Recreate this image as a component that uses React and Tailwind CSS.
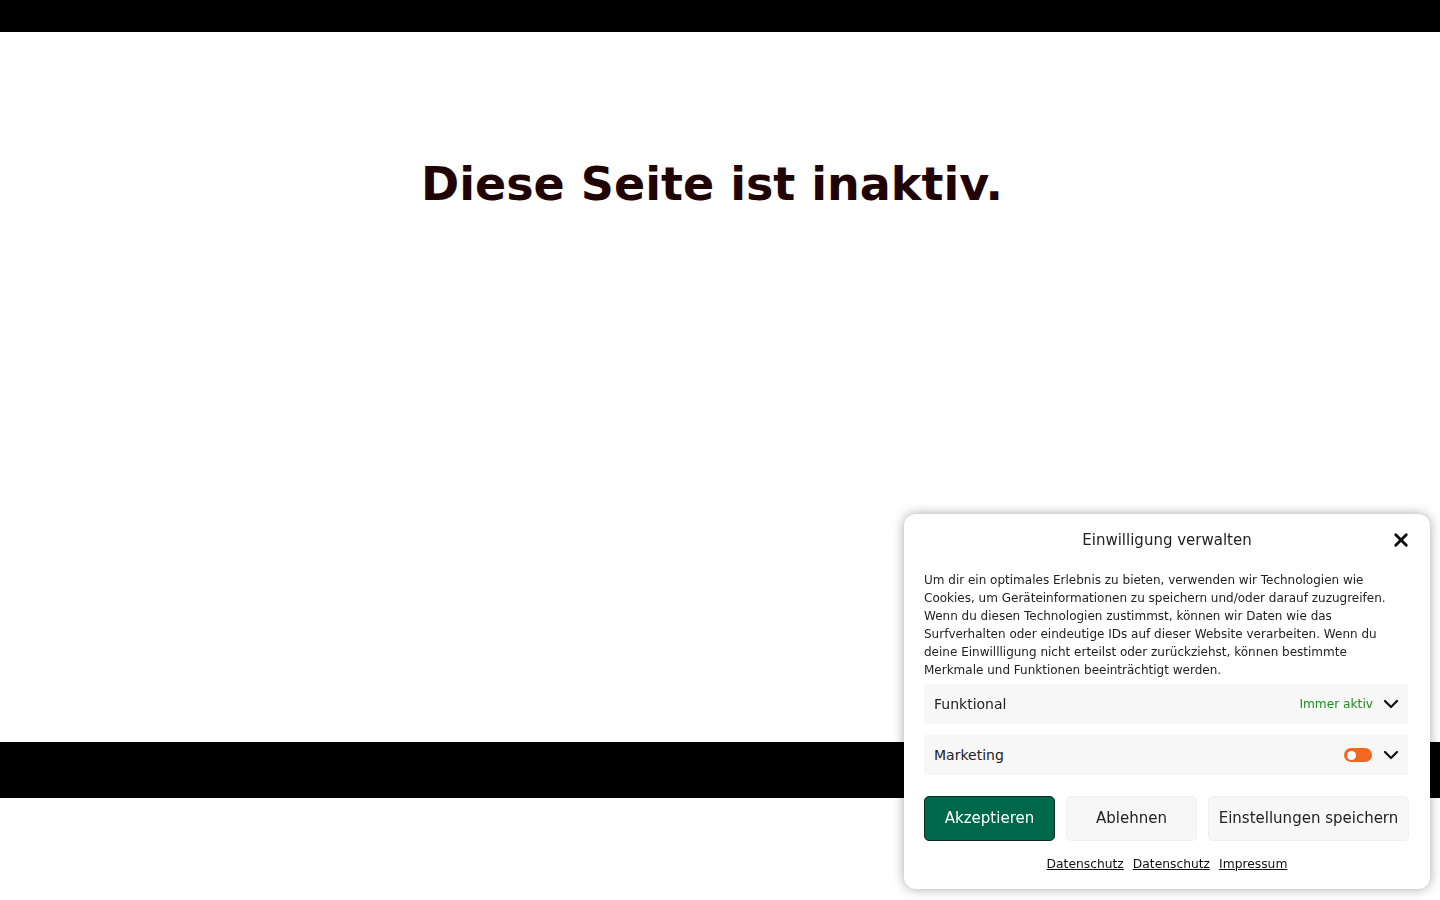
import React from "react";

function Chevron() {
  return (
    <svg width="18" height="18" viewBox="0 0 24 24" fill="none" stroke="#111" strokeWidth="3" strokeLinecap="round" strokeLinejoin="round">
      <path d="M4 8l8 8 8-8" />
    </svg>
  );
}

export default function App() {
  return (
    <div className="min-h-[900px] bg-white" style={{ fontFamily: "'DejaVu Sans', sans-serif" }}>
      <div className="h-8 bg-black" />
      <main className="h-[710px] pt-[129px] pr-4">
        <h1 className="text-center text-[46px] font-bold text-[#200404] leading-none">
          Diese Seite ist inaktiv.
        </h1>
      </main>
      <footer className="h-14 bg-black" />

      {/* Cookie-Banner */}
      <div className="fixed left-[904px] top-[514px] w-[526px] rounded-xl bg-white px-5 pt-4 pb-4 shadow-[0_0_12px_rgba(0,0,0,0.35)] text-[#222]">
        <div className="relative flex justify-center">
          <span className="text-[15px] leading-[20px]">Einwilligung verwalten</span>
          <button className="absolute right-0 top-0">
            <svg width="18" height="20" viewBox="0 0 24 26" fill="none" stroke="#111" strokeWidth="3.8" strokeLinecap="round">
              <path d="M5 6l14 14M19 6L5 20" />
            </svg>
          </button>
        </div>
        <p className="mt-[21px] text-[12px] leading-[18px] text-[#222]">
          Um dir ein optimales Erlebnis zu bieten, verwenden wir Technologien wie Cookies, um Geräteinformationen zu speichern und/oder darauf zuzugreifen. Wenn du diesen Technologien zustimmst, können wir Daten wie das Surfverhalten oder eindeutige IDs auf dieser Website verarbeiten. Wenn du deine Einwillligung nicht erteilst oder zurückziehst, können bestimmte Merkmale und Funktionen beeinträchtigt werden.
        </p>
        <div className="mt-[5px] flex flex-col gap-[11px] mr-[2px]">
          <div className="flex h-10 items-center justify-between bg-[#f7f7f7] pl-[10px] pr-[8px]">
            <span className="text-[14px]">Funktional</span>
            <div className="flex items-center gap-[9px]">
              <span className="text-[12.2px] text-[#1e8e1e]">Immer aktiv</span>
              <Chevron />
            </div>
          </div>
          <div className="flex h-10 items-center justify-between bg-[#f7f7f7] pl-[10px] pr-[8px]">
            <span className="text-[14px]">Marketing</span>
            <div className="flex items-center gap-[10px]">
              <div className="flex h-[14px] w-[28px] items-center rounded-full bg-[#f26722] pl-[3px]">
                <div className="h-[9px] w-[9px] rounded-full bg-white" />
              </div>
              <Chevron />
            </div>
          </div>
        </div>
        <div className="mt-[21px] flex gap-[11px]">
          <button className="h-[45px] w-[131px] rounded-[5px] border border-[#0a2a20] bg-[#00684a] text-[15px] text-white">
            Akzeptieren
          </button>
          <button className="h-[45px] w-[131px] rounded-[5px] border border-[#f0f0f0] bg-[#f7f7f7] text-[15px] text-[#222]">
            Ablehnen
          </button>
          <button className="h-[45px] w-[201px] rounded-[5px] border border-[#f0f0f0] bg-[#f7f7f7] text-[15px] text-[#222]">
            Einstellungen speichern
          </button>
        </div>
        <div className="mt-[14px] flex justify-center gap-[9px] text-[12.3px] text-[#111]">
          <a className="underline">Datenschutz</a>
          <a className="underline">Datenschutz</a>
          <a className="underline">Impressum</a>
        </div>
      </div>
    </div>
  );
}
